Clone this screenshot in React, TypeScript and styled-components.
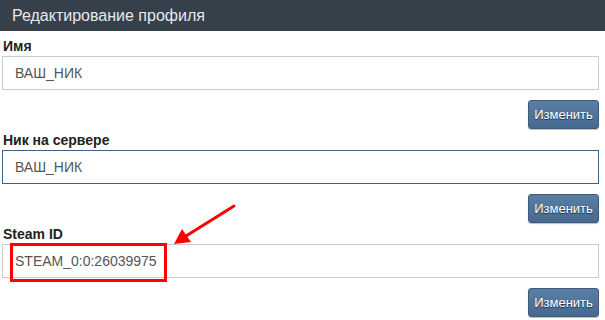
import React from 'react';
import styled, { createGlobalStyle } from 'styled-components';

const GlobalStyle = createGlobalStyle`
    html, body {
        margin: 0;
        padding: 0;
        background: #ffffff;
    }
    body {
        font-family: "Liberation Sans", Arial, sans-serif;
        width: 605px;
        height: 320px;
        overflow: hidden;
    }
`

const Page = styled.div`
    position: relative;
    width: 605px;
    height: 320px;
`

const Header = styled.div`
    height: 31px;
    line-height: 31px;
    background: #36404b;
    color: #e6e9ec;
    font-size: 16px;
    padding-left: 12px;
`

const Form = styled.div`
    display: flex;
    flex-direction: column;
    padding: 7px 6px 0 2px;
`

const Group = styled.div`
    display: flex;
    flex-direction: column;
    margin-bottom: 3px;
`

const Label = styled.label`
    display: block;
    font-size: 14px;
    font-weight: bold;
    line-height: 16px;
    color: #222;
    padding-left: 1px;
    margin-bottom: 2px;
`

const InputWrap = styled.div`
    position: relative;
`

const Input = styled.input<{ $focused?: boolean }>`
    display: block;
    box-sizing: border-box;
    width: 100%;
    height: 34px;
    margin: 0;
    padding: 0 12px;
    font-family: "Liberation Sans", Arial, sans-serif;
    font-size: 14px;
    color: #555;
    background: #fff;
    border: 1px solid ${(p) => (p.$focused ? '#3f5f84' : '#cccccc')};
    border-radius: 0;
    outline: none;
`

const Actions = styled.div`
    display: flex;
    justify-content: flex-end;
    margin-top: 10px;
`

const Button = styled.button`
    box-sizing: border-box;
    height: 29px;
    width: 71px;
    padding: 0;
    border: 1px solid #3d5a7b;
    border-radius: 3px;
    background: linear-gradient(#5b7ea4, #46698f);
    box-shadow: 0 1px 1px rgba(0, 0, 0, 0.25);
    color: #fff;
    font-family: "Liberation Sans", Arial, sans-serif;
    font-size: 13px;
    text-shadow: 0 1px 1px rgba(0, 0, 0, 0.6);
    cursor: pointer;
`

const Highlight = styled.div`
    position: absolute;
    left: 8px;
    top: -1px;
    width: 157px;
    height: 39px;
    box-sizing: border-box;
    border: 3px solid #ff0000;
    pointer-events: none;
`

const Arrow = styled.svg`
    position: absolute;
    left: 0;
    top: 0;
    pointer-events: none;
`

interface FieldProps {
    label: string;
    value: string;
    focused?: boolean;
    marked?: boolean;
}

function Field(props: FieldProps) {
    return (
        <Group>
            <Label>{props.label}</Label>
            <InputWrap>
                <Input defaultValue={props.value} $focused={props.focused} />
                {props.marked && <Highlight />}
            </InputWrap>
            <Actions>
                <Button>Изменить</Button>
            </Actions>
        </Group>
    );
}

function App() {
    return (
        <>
            <GlobalStyle />
            <Page>
                <Header>Редактирование профиля</Header>
                <Form>
                    <Field label="Имя" value="ВАШ_НИК" />
                    <Field label="Ник на сервере" value="ВАШ_НИК" focused />
                    <Field label="Steam ID" value="STEAM_0:0:26039975" marked />
                </Form>
                <Arrow width="605" height="320" viewBox="0 0 605 320">
                    <line x1="234" y1="206" x2="186" y2="236" stroke="#ff0000" strokeWidth="3" strokeLinecap="round" />
                    <polygon points="174,244 182,229 191,242" fill="#ff0000" />
                </Arrow>
            </Page>
        </>
    );
}

export default App;
